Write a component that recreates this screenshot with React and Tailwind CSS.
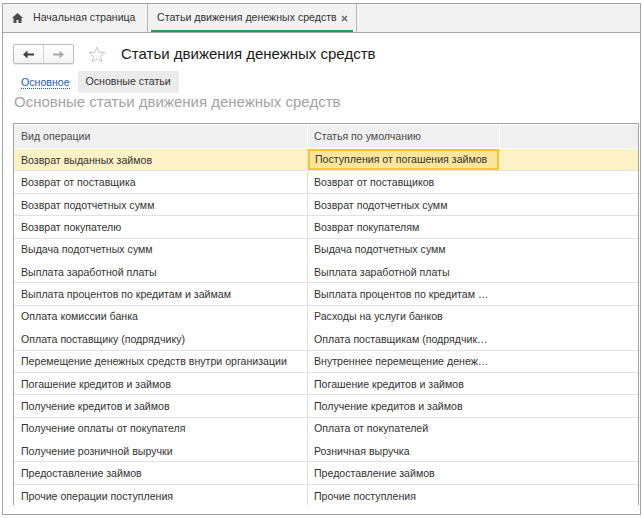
import React from "react";

const rows = [
  ["Возврат выданных займов", "Поступления от погашения займов"],
  ["Возврат от поставщика", "Возврат от поставщиков"],
  ["Возврат подотчетных сумм", "Возврат подотчетных сумм"],
  ["Возврат покупателю", "Возврат покупателям"],
  ["Выдача подотчетных сумм", "Выдача подотчетных сумм"],
  ["Выплата заработной платы", "Выплата заработной платы"],
  ["Выплата процентов по кредитам и займам", "Выплата процентов по кредитам …"],
  ["Оплата комиссии банка", "Расходы на услуги банков"],
  ["Оплата поставщику (подрядчику)", "Оплата поставщикам (подрядчик…"],
  ["Перемещение денежных средств внутри организации", "Внутреннее перемещение денеж…"],
  ["Погашение кредитов и займов", "Погашение кредитов и займов"],
  ["Получение кредитов и займов", "Получение кредитов и займов"],
  ["Получение оплаты от покупателя", "Оплата от покупателей"],
  ["Получение розничной выручки", "Розничная выручка"],
  ["Предоставление займов", "Предоставление займов"],
  ["Прочие операции поступления", "Прочие поступления"],
];

const noLine = new Set([4, 7, 12]);

function HomeIcon() {
  return (
    <svg width="11" height="10" viewBox="0 0 11 10">
      <path d="M5.5 0 L11 5 L9.5 5 L9.5 10 L6.5 10 L6.5 7 L4.5 7 L4.5 10 L1.5 10 L1.5 5 L0 5 Z" fill="#4d4d4d" />
    </svg>
  );
}

function CloseIcon() {
  return (
    <svg width="7" height="7" viewBox="0 0 7 7">
      <path d="M1 1 L6 6 M6 1 L1 6" stroke="#6b6b6b" strokeWidth="1.6" />
    </svg>
  );
}

function Star() {
  return (
    <svg width="18" height="17" viewBox="0 0 18 17">
      <path
        d="M9 1 L11.2 6.3 L17 6.6 L12.5 10.3 L14 16 L9 12.8 L4 16 L5.5 10.3 L1 6.6 L6.8 6.3 Z"
        fill="none"
        stroke="#c9c9c9"
        strokeWidth="1"
        strokeLinejoin="round"
      />
    </svg>
  );
}

function ArrowLeft({ color }) {
  return (
    <svg width="11" height="9" viewBox="0 0 11 9">
      <path d="M0 4.5 L4.5 0.5 L4.5 3.5 L11 3.5 L11 5.5 L4.5 5.5 L4.5 8.5 Z" fill={color} />
    </svg>
  );
}

function ArrowRight({ color }) {
  return (
    <svg width="11" height="9" viewBox="0 0 11 9">
      <path d="M11 4.5 L6.5 0.5 L6.5 3.5 L0 3.5 L0 5.5 L6.5 5.5 L6.5 8.5 Z" fill={color} />
    </svg>
  );
}

export default function App() {
  return (
    <div className="w-[642px] h-[518px] bg-white font-['Liberation_Sans',Arial,sans-serif] text-[#333333] overflow-hidden">
      <div className="ml-[2px] mt-[3px] w-[639px] h-[512px] border border-[#a3a3a3] flex flex-col">
        {/* Tab bar */}
        <div className="h-[29px] shrink-0 bg-[#f2f2f2] border-b border-[#a8a8a8] flex text-[10.6px] whitespace-nowrap">
          <div className="w-[145px] border-r border-[#b5b5b5] flex items-center pl-[9px] gap-[10px] text-[#333]">
            <HomeIcon />
            <span>Начальная страница</span>
          </div>
          <div className="w-[209px] border-r border-[#b5b5b5] relative flex items-center pl-[9px] pr-[8px] justify-between text-[#333]">
            <span>Статьи движения денежных средств</span>
            <CloseIcon />
            <div className="absolute left-[3px] right-[3px] bottom-0 h-[2px] bg-[#1e9e50]" />
          </div>
          <div className="flex-1" />
        </div>

        {/* Content */}
        <div className="flex-1 flex flex-col">
          <div className="mt-[11px] h-[20px] flex items-center ml-[10px]">
            <div className="w-[61px] h-[20px] border border-[#bdbdbd] rounded-[2px] flex bg-gradient-to-b from-white to-[#f3f3f3] shadow-[0_1px_0_#e6e6e6]">
              <div className="w-[30px] h-full border-r border-[#d3d3d3] flex items-center justify-center">
                <ArrowLeft color="#3d3d3d" />
              </div>
              <div className="flex-1 h-full flex items-center justify-center">
                <ArrowRight color="#a9a9a9" />
              </div>
            </div>
            <div className="ml-[14px]">
              <Star />
            </div>
            <div className="ml-[15px] text-[15px] text-[#1a1a1a] leading-[20px] whitespace-nowrap">
              Статьи движения денежных средств
            </div>
          </div>

          <div className="mt-[7px] h-[22px] flex items-center ml-[18px] text-[10.6px]">
            <span className="text-[#1f5bb5] border-b border-dotted border-[#1f5bb5] leading-[12px]">Основное</span>
            <div className="ml-[8px] h-[22px] px-[8px] bg-[#ebebeb] rounded-[2px] flex items-center text-[#333]">
              Основные статьи
            </div>
          </div>

          <div className="h-[18px] leading-[18px] ml-[11px] text-[15px] text-[#a3a3a3] whitespace-nowrap">
            Основные статьи движения денежных средств
          </div>

          <div className="mt-[12px] ml-[10px] mr-[1px] h-[382px] border-t border-l border-r border-[#a3a3a3] overflow-hidden text-[10.6px]">
            <div className="h-[25px] flex gap-[1px] py-[1px] text-[#4a4a4a]">
              <div className="w-[293px] bg-[#f0f0f0] flex items-center pl-[7px] pt-[1px]">Вид операции</div>
              <div className="w-[191px] bg-[#f0f0f0] flex items-center pl-[6px] pt-[1px]">Статья по умолчанию</div>
              <div className="flex-1 bg-[#f0f0f0]" />
            </div>
            {rows.map(([a, b], i) => {
              const sel = i === 0;
              return (
                <div
                  key={i}
                  className={
                    "h-[22.4px] flex border-b " +
                    (noLine.has(i) ? "border-transparent " : "border-[#e2e2e2] ") +
                    (sel ? "bg-[#fdf1c6]" : "")
                  }
                >
                  <div className="w-[293px] flex items-center pl-[7px] pt-[2px] whitespace-nowrap overflow-hidden">{a}</div>
                  <div className="w-[1px] bg-[#e0e0e0]" />
                  {sel ? (
                    <div className="w-[191px] flex items-center pl-[5px] pt-[1px] whitespace-nowrap overflow-hidden border-2 border-[#f6c62c] bg-[#fde59c]">
                      {b}
                    </div>
                  ) : (
                    <div className="w-[191px] flex items-center pl-[6px] pt-[2px] whitespace-nowrap overflow-hidden">{b}</div>
                  )}
                  <div className="flex-1" />
                </div>
              );
            })}
          </div>
        </div>
      </div>
    </div>
  );
}
